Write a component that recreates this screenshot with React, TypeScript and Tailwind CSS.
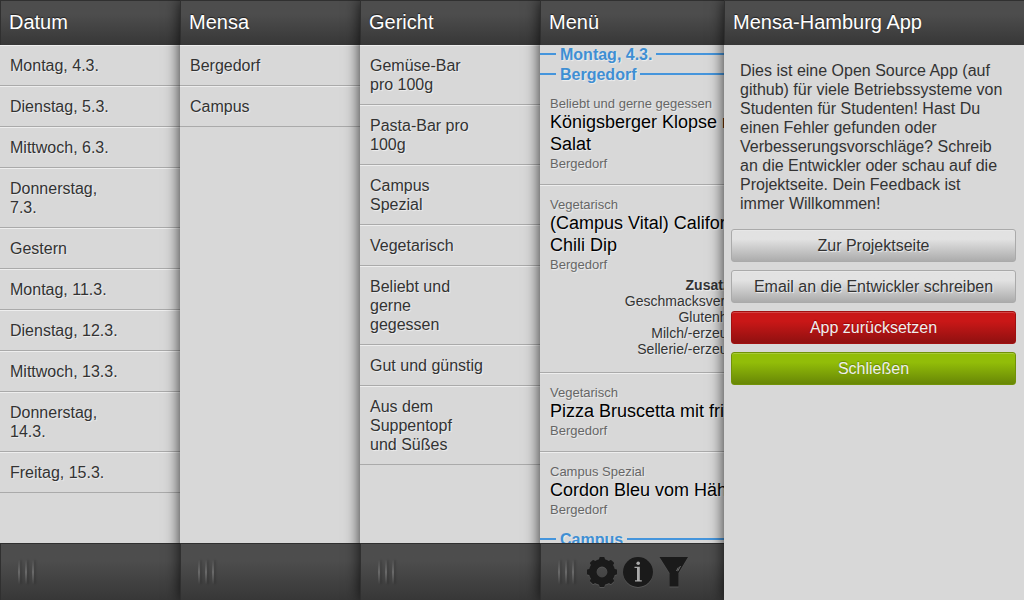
import type { ReactNode } from "react";

const dates = [
  "Montag, 4.3.",
  "Dienstag, 5.3.",
  "Mittwoch, 6.3.",
  "Donnerstag, 7.3.",
  "Gestern",
  "Montag, 11.3.",
  "Dienstag, 12.3.",
  "Mittwoch, 13.3.",
  "Donnerstag, 14.3.",
  "Freitag, 15.3.",
];
const canteens = ["Bergedorf", "Campus"];
const dishes = [
  "Gemüse-Bar pro 100g",
  "Pasta-Bar pro 100g",
  "Campus Spezial",
  "Vegetarisch",
  "Beliebt und gerne gegessen",
  "Gut und günstig",
  "Aus dem Suppentopf und\u00a0Süßes",
];

type Meal = { kind: string; name: string; place: string; additives?: string[] };

const meals: Meal[] = [
  { kind: "Beliebt und gerne gegessen", name: "Königsberger Klopse mit\nSalat", place: "Bergedorf" },
  {
    kind: "Vegetarisch",
    name: "(Campus Vital) California\nChili Dip",
    place: "Bergedorf",
    additives: ["Geschmacksverstärker", "Glutenhaltiges", "Milch/-erzeugnisse", "Sellerie/-erzeugnisse"],
  },
  { kind: "Vegetarisch", name: "Pizza Bruscetta mit frischem", place: "Bergedorf" },
  { kind: "Campus Spezial", name: "Cordon Bleu vom Hähnchen", place: "Bergedorf" },
];

function Grip() {
  return (
    <div className="flex gap-[5px]" aria-hidden="true">
      {[0, 1, 2].map((i) => (
        <span
          key={i}
          className="h-6 w-[2px] bg-linear-to-b from-transparent via-[#6a6a6a] to-transparent shadow-[2px_0_2px_rgba(0,0,0,0.14)]"
        />
      ))}
    </div>
  );
}

function GearIcon() {
  return (
    <svg viewBox="0 0 32 32" className="size-8" aria-hidden="true">
      <circle cx="16" cy="16" r="9.2" fill="none" stroke="#1a1a1a" strokeWidth="7.600" />
      {[0, 45, 90, 135, 180, 225, 270, 315].map((a) => (
        <path key={a} transform={`rotate(${a} 16 16)`} d="M12.800 5l.5-3q.2-1 1-1h3.400q.8 0 1 1l.5 3z" fill="#1a1a1a" />
      ))}
    </svg>
  );
}

function InfoIcon() {
  return (
    <svg viewBox="0 0 32 32" className="size-8" aria-hidden="true">
      <circle cx="16" cy="16" r="15" fill="#1a1a1a" />
      <g fill="#aaaaaa">
        <circle cx="16.200" cy="7.200" r="1.800" />
        <path d="M12.500 10.800h5.300v13.400h2v1.300h-6.800v-1.300h2V12.100h-2.500z" />
      </g>
    </svg>
  );
}

function FunnelIcon() {
  return (
    <svg viewBox="0 0 32 32" className="size-8" aria-hidden="true">
      <path d="M1.500 1h28.500L20.500 17v13.500h-9V17z" fill="#1a1a1a" />
      <path d="M22.500 10l-2.800 5.200M20.300 11.500l-1.800 3.500" stroke="#777" strokeWidth=".9" fill="none" />
    </svg>
  );
}

const bar =
  "shrink-0 border-l border-t border-[#303030] bg-linear-to-b from-[#4d4d4d] from-30% to-[#373737] flex items-center";

function Panel({
  title,
  className,
  footer,
  children,
}: {
  title: string;
  className: string;
  footer?: ReactNode;
  children: ReactNode;
}) {
  return (
    <section className={`relative flex flex-col bg-[#d8d8d8] shadow-[0_0_14px_rgba(0,0,0,0.8)] ${className}`}>
      <header className={`${bar} h-[45px] px-2 pb-[2px]`}>
        <h1 className="text-xl text-white [text-shadow:0_-1px_1px_#222]">{title}</h1>
      </header>
      <div className="min-h-0 flex-1 overflow-hidden">{children}</div>
      {footer && <footer className={`${bar} h-[57px] pl-[17px]`}>{footer}</footer>}
    </section>
  );
}

function List({ items }: { items: string[] }) {
  return (
    <ul>
      {items.map((item) => (
        <li key={item} className="border-b border-t border-b-[#aaa] border-t-[#eee]">
          <a href="#" className="block py-[10px] pl-[10px] pr-14 text-base leading-[19px]">
            {item}
          </a>
        </li>
      ))}
    </ul>
  );
}

function Divider({ children }: { children: string }) {
  return (
    <h2 className="flex h-5 items-center gap-1 text-base leading-5 font-bold text-[#3f8fd3]">
      <span className="mb-[3px] h-[2px] w-4 bg-[#4595dc]" />
      {children}
      <span className="mb-[3px] h-[2px] flex-1 bg-[#4595dc]" />
    </h2>
  );
}

function MealEntry({ meal }: { meal: Meal }) {
  return (
    <li className="border-b border-t border-b-[#aaa] border-t-[#eee] px-[10px] pt-[11px] pb-[12px] first:border-t-0 last:border-b-0">
      <p className="text-[13px] leading-[15px] text-[#666]">{meal.kind}</p>
      <h3 className="text-lg leading-[22px] whitespace-pre text-black">{meal.name}</h3>
      <p className="text-[13px] leading-[17px] text-[#666]">{meal.place}</p>
      {meal.additives && (
        <div className="mt-1 mb-[3px] pr-[2px] text-right text-sm leading-4">
          <p className="font-bold">Zusatzstoffe</p>
          {meal.additives.map((a) => (
            <p key={a}>{a}</p>
          ))}
        </div>
      )}
    </li>
  );
}

const button =
  "block h-[33px] w-full rounded-[3px] border text-center text-base leading-[31px] shadow-[inset_0_1px_0_rgba(255,255,255,0.2)]";
const grayButton = `${button} border-[#aaa] bg-linear-to-b from-[#e2e2e2] from-30% to-[#acacac]`;
const iconButton = "drop-shadow-[0_1px_0_#555]";

export default function App() {
  return (
    <main className="flex h-screen overflow-hidden bg-[#d8d8d8] font-['Liberation_Sans',Arial,sans-serif] text-[#333] [text-shadow:1px_1px_1px_#eee]">
      <Panel title="Datum" className="w-[180px] shrink-0" footer={<Grip />}>
        <List items={dates} />
      </Panel>
      <Panel title="Mensa" className="w-[180px] shrink-0" footer={<Grip />}>
        <List items={canteens} />
      </Panel>
      <Panel title="Gericht" className="w-[180px] shrink-0" footer={<Grip />}>
        <List items={dishes} />
      </Panel>
      <Panel
        title="Menü"
        className="min-w-0 flex-1"
        footer={
          <>
            <Grip />
            <div className="ml-3 flex gap-1">
              <button type="button" aria-label="Einstellungen" className={iconButton}>
                <GearIcon />
              </button>
              <button type="button" aria-label="Info" className={iconButton}>
                <InfoIcon />
              </button>
              <button type="button" aria-label="Filter" className={iconButton}>
                <FunnelIcon />
              </button>
            </div>
          </>
        }
      >
        <div className="min-w-60">
          <Divider>Montag, 4.3.</Divider>
          <Divider>Bergedorf</Divider>
          <ul>
            {meals.map((meal) => (
              <MealEntry key={meal.name} meal={meal} />
            ))}
          </ul>
          <Divider>Campus</Divider>
        </div>
      </Panel>
      <Panel title="Mensa-Hamburg App" className="w-[300px] shrink-0">
        <p className="px-4 pt-4 text-base leading-[19px] [text-shadow:none]">
          Dies ist eine Open Source App (auf github) für viele Betriebssysteme von Studenten für Studenten! Hast Du
          einen Fehler gefunden oder Verbesserungsvorschläge? Schreib an die Entwickler oder schau auf die
          Projektseite. Dein Feedback ist immer Willkommen!
        </p>
        <div className="mt-4 flex flex-col gap-2 pr-2 pl-[7px]">
          <a href="#" className={grayButton}>
            Zur Projektseite
          </a>
          <a href="#" className={grayButton}>
            Email an die Entwickler schreiben
          </a>
          <button
            type="button"
            className={`${button} border-[#a01010] bg-linear-to-b from-[#c91717] from-30% to-[#901010] text-[#eee] [text-shadow:0_-1px_1px_#900]`}
          >
            App zurücksetzen
          </button>
          <button
            type="button"
            className={`${button} border-[#719207] bg-linear-to-b from-[#92bd09] from-30% to-[#688706] text-[#eee] [text-shadow:0_-1px_1px_#688706]`}
          >
            Schließen
          </button>
        </div>
      </Panel>
    </main>
  );
}
